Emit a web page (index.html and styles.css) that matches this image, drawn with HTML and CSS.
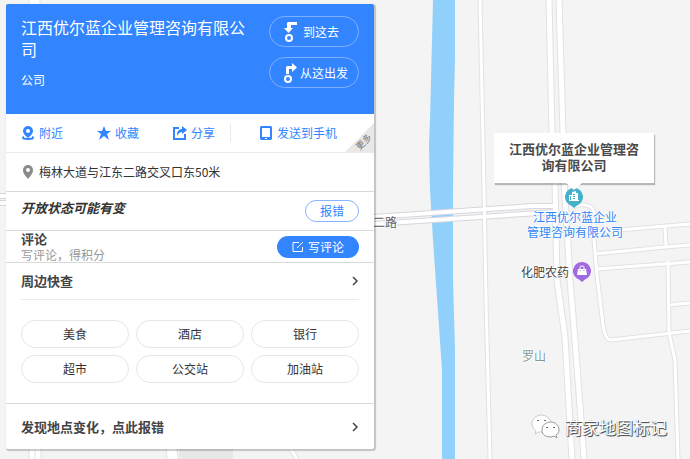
FILE: index.html
```html
<!DOCTYPE html>
<html lang="zh-CN">
<head>
<meta charset="utf-8">
<meta name="viewport" content="width=device-width, initial-scale=1">
<title>江西优尔蓝企业管理咨询有限公司</title>
<link rel="stylesheet" href="styles.css">
</head>
<body>
<div class="map">
  <svg class="map-canvas" viewBox="0 0 690 459" preserveAspectRatio="xMinYMin slice" aria-hidden="true">
    <defs>
      <g id="minor-roads">
        <path d="M480 0L484 190L486 300L490 459"/>
        <path d="M573 207C583 203 594 204 594 215V240L597 275L603 325Q605 340 611 340L690 331"/>
        <path d="M595 232L690 224M665 227L666 246M594 254L665 247L690 245M597 269L690 262"/>
        <path d="M668 261L669 333L675 360L678 459M669 305L690 303"/>
        <path d="M291 449L297 459"/>
      </g>
      <g id="major-roads">
        <path d="M549 0L552 133L555 180L557 280L565 337L572 459"/>
        <path d="M559 0L563 133L564 180L570 280L575 340L584 459"/>
        <path d="M32 0V4M37 0V4M32 449V459M38 449V459M169 449L170 459M174 449L175 459"/>
      </g>
      <g id="cross-roads">
        <path d="M0 196L6 196M374 217L532 206L554 206M0 203L6 203M374 224L554 212"/>
      </g>
    </defs>
    <path class="block" d="M179 440H233V459H179Z"/>
    <path class="river" d="M433 0L430 120L429 145L430 190L433 240L442 370V459H455V350L453 280V190L454 100L455 60V0Z"/>
    <use class="casing-minor" href="#minor-roads"/>
    <use class="casing-cross" href="#cross-roads"/>
    <use class="casing-major" href="#major-roads"/>
    <use class="fill-minor" href="#minor-roads"/>
    <use class="fill-cross" href="#cross-roads"/>
    <use class="fill-major" href="#major-roads"/>
  </svg>

  <span class="label road-label">二路</span>
  <span class="label village-label">罗山</span>
  <span class="label shop-label">化肥农药</span>
  <span class="label company-label">江西优尔蓝企业<br>管理咨询有限公司</span>

  <svg class="pin company-pin" viewBox="0 0 20 22" aria-hidden="true">
    <path fill="#45b1c8" d="M10 1a9 9 0 0 1 3 17.500L10 21L7 18.500A9 9 0 0 1 10 1Z"/>
    <path fill="#fff" d="M5 8h3V5l4-1v2h2v7h1v1H5ZM9 7v1h2V7Zm0 2v1h2V9Zm0 2v1h2v-1ZM6 9v4h1V9Z" fill-rule="evenodd"/>
  </svg>
  <svg class="pin shop-pin" viewBox="0 0 20 22" aria-hidden="true">
    <path fill="#a26ae0" d="M10 1a9 9 0 0 1 3 17.500L10 21L7 18.500A9 9 0 0 1 10 1Z"/>
    <path fill="#fff" d="M6 8h8l1 6H5Z"/>
    <path fill="none" stroke="#fff" d="M8 8V6q0-1 2-1t2 1v2"/>
    <path fill="none" stroke="#a26ae0" d="M8 9v1M12 9v1"/>
  </svg>
  <div class="popup">江西优尔蓝企业管理咨询有限公司</div>

  <div class="watermark">
    <svg viewBox="0 0 30 26" aria-hidden="true">
      <path fill="#fff" stroke="#ccc" d="M11 1C5 1 1 5 1 10c0 3 2 5 4 7l-1 3 4-2h4C21 18 21 10 19 6 17 3 14 1 11 1Z"/>
      <path fill="#fff" stroke="#999" d="M20 8c-5 0-9 3-9 8s4 7 9 7l3-1 3 2-1-3c2-1 3-3 3-5 0-5-4-8-8-8Z"/>
      <path fill="none" stroke="#666" d="M6 7q1-2 2 0M13 7q1-2 2 0M15 14q1-2 2 0M22 14q1-2 2 0"/>
    </svg>
    <span>商家地图标记</span>
  </div>
</div>

<main class="panel">
  <header class="head">
    <div class="head-text">
      <h1>江西优尔蓝企业管理咨询有限公司</h1>
      <p>公司</p>
    </div>
    <div class="routes">
      <button type="button" class="route route-to">
        <svg viewBox="0 0 14 20" aria-hidden="true"><path fill="#fff" d="M4 0h9v3H7v3h2L4.500 11 0 6h3V1Z"/><circle cx="5" cy="16" r="3" fill="none" stroke="#fff" stroke-width="2"/></svg>
        到这去
      </button>
      <button type="button" class="route">
        <svg viewBox="0 0 14 20" aria-hidden="true"><path fill="#fff" d="M2 11V4l1-1h5V0l5 4.500L8 9V6H5v5Z"/><circle cx="4" cy="16" r="3" fill="none" stroke="#fff" stroke-width="2"/></svg>
        从这出发
      </button>
    </div>
  </header>

  <nav class="actions">
    <a href="#near">
      <svg viewBox="0 0 14 14" aria-hidden="true"><path fill="#3385ff" fill-rule="evenodd" d="M7 0a5 5 0 0 1 5 5c0 3-3 5-5 7-2-2-5-4-5-7a5 5 0 0 1 5-5Zm0 3a2 2 0 1 0 0 4 2 2 0 0 0 0-4Z"/><path fill="none" stroke="#3385ff" stroke-width="2" d="M3 11c-2 1-1 2 4 2s6-1 4-2"/></svg>附近
    </a>
    <a href="#fav">
      <svg viewBox="0 0 14 14" aria-hidden="true"><path fill="#3385ff" d="M7 0l2 5h5l-4 3 2 6-5-4-5 4 2-6-4-3h5Z"/></svg>收藏
    </a>
    <a href="#share">
      <svg viewBox="0 0 14 14" aria-hidden="true"><path fill="none" stroke="#3385ff" stroke-width="2" d="M6 2H1v11h11V8"/><path fill="#3385ff" d="M9 0l5 4-5 4V6C7 6 6 7 4 10c0-5 2-7 5-7Z"/></svg>分享
    </a>
    <a href="#phone" class="send">
      <svg viewBox="0 0 14 14" aria-hidden="true"><path fill="#3385ff" fill-rule="evenodd" d="M2 0h10l1 1v12l-1 1H2l-1-1V1ZM3 2v9h8V2ZM6 12v1h2v-1Z"/></svg>发送到手机
    </a>
    <button type="button" class="more"><span>更多</span></button>
  </nav>

  <div class="address">
    <svg viewBox="0 0 12 16" aria-hidden="true"><path fill="#8a8a8a" fill-rule="evenodd" d="M6 1a5 5 0 0 1 5 5c0 4-3 6-5 9C4 12 1 10 1 6a5 5 0 0 1 5-5Zm0 3a2 2 0 1 0 0 4 2 2 0 0 0 0-4Z"/></svg>
    梅林大道与江东二路交叉口东50米
  </div>

  <section class="row status">
    <em>开放状态可能有变</em>
    <button type="button" class="report">报错</button>
  </section>

  <section class="row review">
    <div>
      <h2>评论</h2>
      <p>写评论，得积分</p>
    </div>
    <button type="button" class="write">
      <svg viewBox="0 0 12 12" aria-hidden="true"><path fill="none" stroke="#fff" d="M7 1.500H1v9h9.500V6M5 7l6-6"/></svg>写评论
    </button>
  </section>

  <section class="nearby" id="near">
    <a class="nearby-head" href="#nearby">
      <h2>周边快查</h2>
      <svg class="chevron" viewBox="0 0 8 10" aria-hidden="true"><path stroke-width="1.5" d="M2 1l4 4-4 4"/></svg>
    </a>
    <div class="tags">
      <button type="button">美食</button>
      <button type="button">酒店</button>
      <button type="button">银行</button>
      <button type="button">超市</button>
      <button type="button">公交站</button>
      <button type="button">加油站</button>
    </div>
  </section>

  <a class="feedback" href="#feedback">
    <h2>发现地点变化，点此报错</h2>
    <svg class="chevron" viewBox="0 0 8 10" aria-hidden="true"><path stroke-width="1.5" d="M2 1l4 4-4 4"/></svg>
  </a>
</main>
</body>
</html>
```
FILE: styles.css
```css
* {
  box-sizing: border-box;
}

body {
  margin: 0;
  min-height: 100vh;
  padding: 4px 6px 9px;
  background: #f4f4f4;
  color: #333;
  font: 12px/16px "Noto Sans CJK SC", sans-serif;
}

h1, h2, p {
  margin: 0;
}

h2 {
  color: #444;
  font-size: 13px;
  line-height: 16px;
}

a {
  color: inherit;
  text-decoration: none;
}

button {
  padding: 0;
  border: 0;
  background: none;
  color: inherit;
  font: inherit;
  cursor: pointer;
}

svg {
  display: block;
  flex: none;
}

/* Map canvas */

.map {
  position: absolute;
  inset: 0;
  overflow: hidden;
}

.map-canvas {
  width: 100%;
  height: 100%;
}

.block { fill: #e8e8e8; }
.river { fill: #91d0fb; }

.casing-minor,
.casing-cross,
.casing-major,
.fill-minor,
.fill-cross,
.fill-major {
  fill: none;
  stroke: #e2e2e4;
  stroke-width: 5px;
}

.casing-major { stroke-width: 7px; }
.casing-cross { stroke: #d6d6de; stroke-width: 6px; }
.fill-minor { stroke: #fff; stroke-width: 3px; }
.fill-cross { stroke: #fff; stroke-width: 4px; }
.fill-major { stroke: #fff; stroke-width: 5px; }

.label {
  position: absolute;
  line-height: 15px;
  white-space: nowrap;
  text-shadow: 1px 0 #fff, -1px 0 #fff, 0 1px #fff, 0 -1px #fff;
}

.road-label {
  left: 373px;
  top: 214px;
  color: #777;
  font-weight: 500;
}

.village-label {
  left: 522px;
  top: 348px;
  color: #839a9a;
}

.shop-label {
  left: 521px;
  top: 264px;
  color: #444;
}

.company-label {
  left: 527px;
  top: 209px;
  color: #2f86f6;
  text-align: center;
}

.pin {
  position: absolute;
  width: 20px;
  height: 22px;
}

.company-pin {
  left: 564px;
  top: 187px;
}

.shop-pin {
  left: 572px;
  top: 261px;
}

.popup {
  position: absolute;
  left: 494px;
  top: 133px;
  width: 160px;
  padding: 8px 14px 10px;
  background: #fff;
  box-shadow: 1px 2px 1px rgba(0, 0, 0, 0.25);
  color: #4a4a4a;
  font-size: 13px;
  font-weight: 700;
  text-align: center;
}

.popup::after {
  content: "";
  position: absolute;
  left: 72px;
  top: 100%;
  border: 8px solid transparent;
  border-top: 7px solid #fff;
  border-bottom: 0;
}

.watermark {
  position: absolute;
  left: 531px;
  top: 414px;
  display: flex;
  align-items: center;
  gap: 4px;
  color: #fff;
  font-size: 17px;
  line-height: 26px;
  white-space: nowrap;
  text-shadow: 1px 1px #555, 0 1px 1px #666;
}

.watermark svg {
  width: 30px;
  height: 26px;
}

/* Place panel */

.panel {
  position: relative;
  max-width: 368px;
  overflow: hidden;
  border-radius: 2px;
  background: #fff;
  box-shadow: 1px 1px 1px 1px rgba(0, 0, 0, 0.2);
}

.head {
  display: flex;
  justify-content: space-between;
  gap: 20px;
  min-height: 110px;
  padding: 12px 15px;
  background: #3385ff;
  color: #fff;
}

.head h1 {
  font-size: 16px;
  font-weight: 400;
  line-height: 22px;
}

.head p {
  margin-top: 12px;
}

.routes {
  display: flex;
  flex: none;
  flex-direction: column;
  gap: 10px;
}

.route {
  display: flex;
  align-items: center;
  gap: 2px;
  width: 90px;
  height: 31px;
  padding-left: 14px;
  border: 1px solid #7db1ff;
  border-radius: 16px;
}

.route-to {
  gap: 5px;
}

.route svg {
  width: 14px;
  height: 20px;
}

.actions {
  position: relative;
  display: flex;
  align-items: center;
  gap: 34px;
  height: 39px;
  padding-left: 15px;
  border-bottom: 1px solid #ebebeb;
  color: #3385ff;
  white-space: nowrap;
}

.actions a {
  display: flex;
  flex: none;
  align-items: center;
  gap: 4px;
  height: 18px;
}

.actions svg {
  width: 14px;
  height: 14px;
}

.actions .send {
  margin-left: -19px;
  padding-left: 28px;
  border-left: 1px solid #ebebeb;
}

/* Folded corner over the action bar */
.more {
  position: absolute;
  right: 0;
  bottom: 0;
  display: flex;
  align-items: center;
  justify-content: center;
  width: 29px;
  height: 29px;
  padding: 9px 0 0 9px;
  background: #e8e8e8;
  clip-path: polygon(100% 0, 100% 100%, 0 100%);
  color: #777;
  font-size: 9px;
  line-height: 10px;
}

.more span {
  transform: rotate(-45deg);
}

.address {
  display: flex;
  align-items: center;
  gap: 5px;
  height: 39px;
  padding: 0 16px;
  border-bottom: 1px solid #d9d9d9;
}

.address svg {
  width: 12px;
  height: 16px;
}

.row {
  display: flex;
  align-items: center;
  justify-content: space-between;
  padding: 0 15px;
  border-bottom: 1px solid #d9d9d9;
}

.status {
  height: 39px;
}

.status em {
  align-self: flex-start;
  padding-top: 8px;
  font-size: 13px;
  font-weight: 700;
}

.report {
  width: 54px;
  height: 22px;
  border: 1px solid #85b5ff;
  border-radius: 11px;
  color: #3385ff;
}

.review {
  height: 32px;
}

.review p {
  color: #999;
}

.write {
  display: flex;
  align-items: center;
  justify-content: center;
  gap: 4px;
  width: 82px;
  height: 22px;
  border-radius: 11px;
  background: #3385ff;
  color: #fff;
}

.write svg {
  width: 12px;
  height: 12px;
}

.nearby {
  padding: 0 15px 20px;
  border-bottom: 1px solid #d9d9d9;
}

.nearby-head,
.feedback {
  display: flex;
  align-items: center;
  justify-content: space-between;
}

.nearby-head {
  height: 37px;
  border-bottom: 1px solid #ebebeb;
}

.chevron {
  width: 8px;
  height: 10px;
  fill: none;
  stroke: #444;
}

.tags {
  display: grid;
  grid-template-columns: repeat(3, 1fr);
  gap: 7px;
  margin-top: 20px;
}

.tags button {
  height: 28px;
  border: 1px solid #e6e6e6;
  border-radius: 14px;
}

.feedback {
  height: 45px;
  padding: 0 15px;
}
```
